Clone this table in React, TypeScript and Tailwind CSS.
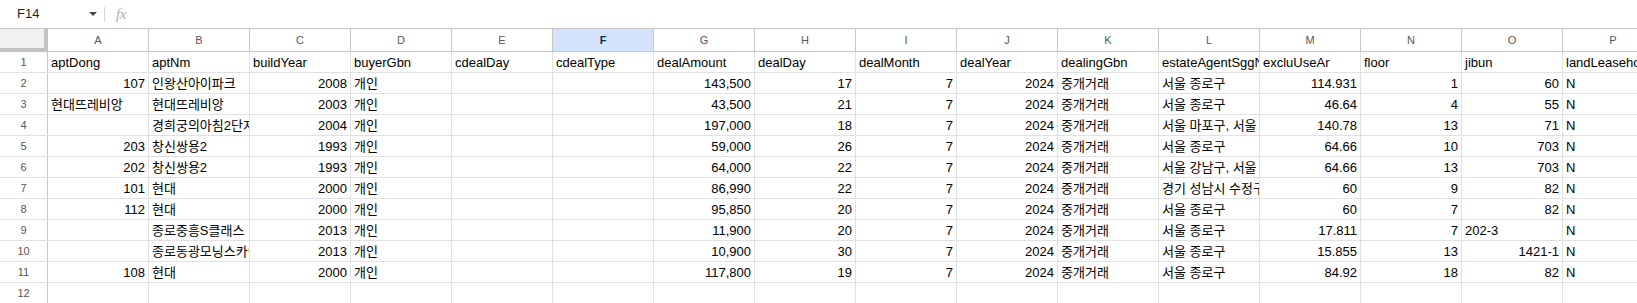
import React from 'react';

const columns = ['A', 'B', 'C', 'D', 'E', 'F', 'G', 'H', 'I', 'J', 'K', 'L', 'M', 'N', 'O', 'P'];

const headers = [
    'aptDong', 'aptNm', 'buildYear', 'buyerGbn', 'cdealDay', 'cdealType', 'dealAmount', 'dealDay',
    'dealMonth', 'dealYear', 'dealingGbn', 'estateAgentSggNm', 'excluUseAr', 'floor', 'jibun', 'landLeasehold',
];

// number => right aligned, string => left aligned (like Sheets); { r } forces right
type Cell = string | number | null | { r: string };

const rows: Cell[][] = [
    [107, '인왕산아이파크', 2008, '개인', null, null, '143,500', 17, 7, 2024, '중개거래', '서울 종로구', '114.931', 1, 60, 'N'],
    ['현대뜨레비앙', '현대뜨레비앙', 2003, '개인', null, null, '43,500', 21, 7, 2024, '중개거래', '서울 종로구', '46.64', 4, 55, 'N'],
    [null, '경희궁의아침2단지', 2004, '개인', null, null, '197,000', 18, 7, 2024, '중개거래', '서울 마포구, 서울 종로구', '140.78', 13, 71, 'N'],
    [203, '창신쌍용2', 1993, '개인', null, null, '59,000', 26, 7, 2024, '중개거래', '서울 종로구', '64.66', 10, 703, 'N'],
    [202, '창신쌍용2', 1993, '개인', null, null, '64,000', 22, 7, 2024, '중개거래', '서울 강남구, 서울 종로구', '64.66', 13, 703, 'N'],
    [101, '현대', 2000, '개인', null, null, '86,990', 22, 7, 2024, '중개거래', '경기 성남시 수정구', 60, 9, 82, 'N'],
    [112, '현대', 2000, '개인', null, null, '95,850', 20, 7, 2024, '중개거래', '서울 종로구', 60, 7, 82, 'N'],
    [null, '종로중흥S클래스', 2013, '개인', null, null, '11,900', 20, 7, 2024, '중개거래', '서울 종로구', '17.811', 7, '202-3', 'N'],
    [null, '종로동광모닝스카이', 2013, '개인', null, null, '10,900', 30, 7, 2024, '중개거래', '서울 종로구', '15.855', 13, { r: '1421-1' }, 'N'],
    [108, '현대', 2000, '개인', null, null, '117,800', 19, 7, 2024, '중개거래', '서울 종로구', '84.92', 18, 82, 'N'],
];

const isRight = (v: Cell) =>
    typeof v === 'number' || (typeof v === 'string' && /^[\d,.]+$/.test(v)) || (v !== null && typeof v === 'object');

const label = (v: Cell) => (v === null ? '' : typeof v === 'object' ? v.r : v);

const DataCell: React.FC<{ value: Cell }> = ({ value }) => (
    <div
        className={`w-[101px] shrink-0 h-full border-r border-[#e1e1e1] px-[3px] overflow-hidden whitespace-nowrap leading-[21px] ${
            isRight(value) ? 'text-right' : 'text-left'
        }`}
    >
        {label(value)}
    </div>
);

const App: React.FC = () => {
    return (
        <div
            className="w-[1637px] h-[303px] overflow-hidden bg-white text-[13px] text-black"
            style={{ fontFamily: '"Liberation Sans", Arial, "Noto Sans CJK KR", sans-serif' }}
        >
            {/* formula bar */}
            <div className="h-[29px] flex items-center border-b border-[#c7c7c7]">
                <div className="w-[104px] flex items-center justify-between pl-[17px] pr-[7px]">
                    <span className="text-[13px] text-[#1f1f1f]">F14</span>
                    <svg width="8" height="4" viewBox="0 0 8 4">
                        <path d="M0 0 L8 0 L4 4 Z" fill="#444746" />
                    </svg>
                </div>
                <div className="w-px h-[15px] bg-[#d5d5d5]" />
                <span
                    className="ml-[11px] italic text-[15px] text-[#b0b0b0] tracking-tight"
                    style={{ fontFamily: '"Liberation Serif", serif' }}
                >
                    fx
                </span>
            </div>

            {/* column header row */}
            <div className="h-[23px] flex border-b border-[#c7c7c7]">
                <div className="w-[48px] shrink-0 h-full bg-[#f1f1f1] border-r-4 border-b-[3px] border-[#c2c2c2]" />
                {columns.map((c) => (
                    <div
                        key={c}
                        className={`w-[101px] shrink-0 h-full flex items-center justify-center border-r border-[#c7c7c7] text-[11px] ${
                            c === 'F' ? 'bg-[#d3e3fd] text-[#0b2a5e] font-bold' : 'text-[#575757]'
                        }`}
                    >
                        {c}
                    </div>
                ))}
            </div>

            {/* body */}
            {[headers, ...rows, Array(16).fill(null)].map((row, i) => (
                <div key={i} className="h-[21px] flex border-b border-[#e1e1e1]">
                    <div className="w-[48px] shrink-0 h-full flex items-center justify-center border-r border-[#c7c7c7] text-[11px] text-[#575757]">
                        {i + 1}
                    </div>
                    {(row as Cell[]).map((v, j) => (
                        <DataCell key={j} value={v} />
                    ))}
                </div>
            ))}
        </div>
    );
};

export default App;
